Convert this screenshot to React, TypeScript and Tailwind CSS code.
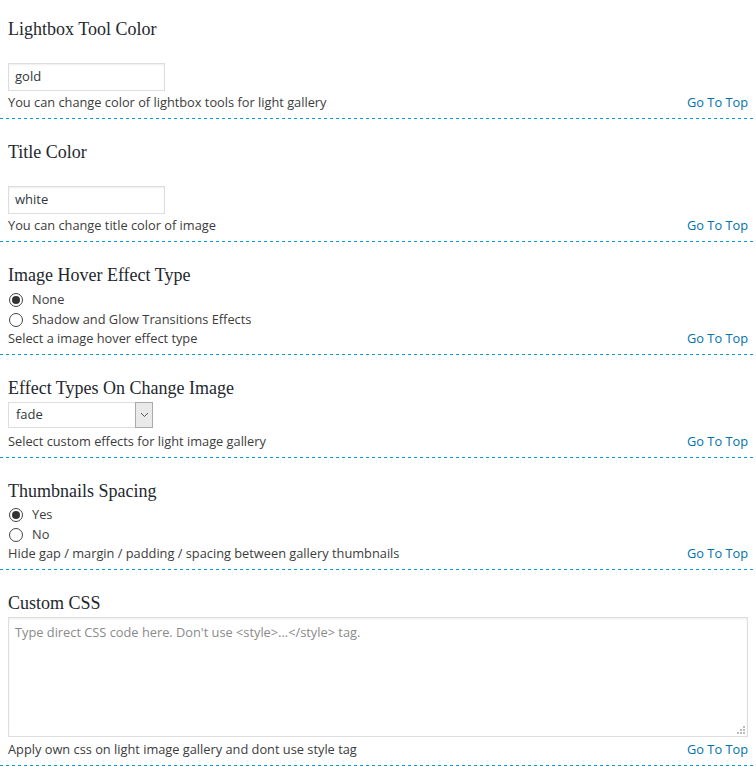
import React from "react";

const body = "font-['Segoe_UI','Open_Sans',sans-serif]";

function Footer({ text }: { text: string }) {
  return (
    <div className="flex justify-between items-center h-[18px] text-[12.8px] leading-[18px]">
      <span className="text-[#3c3c3c]">{text}</span>
      <a className="text-[#0073aa] mr-[8px]" href="#">Go To Top</a>
    </div>
  );
}

function Heading({ children }: { children: React.ReactNode }) {
  return (
    <h3 className="font-['Liberation_Serif',serif] text-[18px] leading-[24px] text-[#23282d] pl-[8px]">
      {children}
    </h3>
  );
}

function Radio({ checked, label }: { checked?: boolean; label: string }) {
  return (
    <div className="flex items-center h-[20px] pl-[9px]">
      <span className="w-[14px] h-[14px] rounded-full border border-[#444] bg-white flex items-center justify-center">
        {checked && <span className="w-[8px] h-[8px] rounded-full bg-[#333]" />}
      </span>
      <span className="ml-[9px] text-[12.8px] text-[#3c3c3c]">{label}</span>
    </div>
  );
}

function Section({ children, first }: { children: React.ReactNode; first?: boolean }) {
  return (
    <div>
      <div className={`${first ? "pt-[17px]" : "pt-[21px]"} pb-[7px]`}>{children}</div>
      <div className="h-px w-full bg-[repeating-linear-gradient(to_right,#00a0d2_0px,#00a0d2_3px,transparent_3px,transparent_6px)]" />
    </div>
  );
}

export default function App() {
  return (
    <div className={`${body} w-[756px] bg-white text-[13px] text-[#444]`}>
      <Section first>
        <Heading>Lightbox Tool Color</Heading>
        <div className="pl-[8px] mt-[22px]">
          <div className="w-[157px] h-[28px] border border-[#ddd] shadow-[inset_0_1px_2px_rgba(0,0,0,0.07)] px-[6px] flex items-center text-[13px] text-[#32373c]">gold</div>
        </div>
        <div className="pl-[8px] mt-[2px]"><Footer text="You can change color of lightbox tools for light gallery" /></div>
      </Section>
      <Section>
        <Heading>Title Color</Heading>
        <div className="pl-[8px] mt-[22px]">
          <div className="w-[157px] h-[28px] border border-[#ddd] shadow-[inset_0_1px_2px_rgba(0,0,0,0.07)] px-[6px] flex items-center text-[13px] text-[#32373c]">white</div>
        </div>
        <div className="pl-[8px] mt-[2px]"><Footer text="You can change title color of image" /></div>
      </Section>
      <Section>
        <Heading>Image Hover Effect Type</Heading>
        <div className="mt-[3px]">
          <Radio checked label="None" />
          <Radio label="Shadow and Glow Transitions Effects" />
        </div>
        <div className="pl-[8px] -mt-px"><Footer text="Select a image hover effect type" /></div>
      </Section>
      <Section>
        <Heading>Effect Types On Change Image</Heading>
        <div className="pl-[8px] mt-[2px]">
          <div className="w-[145px] h-[26px] border border-[#ddd] flex">
            <div className="flex-1 px-[7px] flex items-center text-[13px] text-[#32373c]">fade</div>
            <div className="w-[18px] bg-[#e9e9e9] border border-[#aaa] -my-px -mr-px h-[26px] flex items-center justify-center">
              <svg width="9" height="6" viewBox="0 0 9 6"><path d="M1 1 L4.5 4.5 L8 1" fill="none" stroke="#555" strokeWidth="1" /></svg>
            </div>
          </div>
        </div>
        <div className="pl-[8px] mt-[4px]"><Footer text="Select custom effects for light image gallery" /></div>
      </Section>
      <Section>
        <Heading>Thumbnails Spacing</Heading>
        <div className="mt-[2px]">
          <Radio checked label="Yes" />
          <Radio label="No" />
        </div>
        <div className="pl-[8px] -mt-px"><Footer text="Hide gap / margin / padding / spacing between gallery thumbnails" /></div>
      </Section>
      <Section>
        <Heading>Custom CSS</Heading>
        <div className="pl-[8px] pr-[8px] mt-[2px]">
          <div className="relative h-[120px] border border-[#ddd] shadow-[inset_0_1px_2px_rgba(0,0,0,0.07)] px-[6px] pt-[4px] text-[12.8px] text-[#8a8a8a] leading-[20px]">
            {"Type direct CSS code here. Don't use <style>...</style> tag."}
            <svg className="absolute right-[2px] bottom-[2px]" width="8" height="8" viewBox="0 0 8 8">
              <rect x="6" y="0" width="2" height="2" fill="#bbb" />
              <rect x="3" y="3" width="2" height="2" fill="#bbb" />
              <rect x="6" y="3" width="2" height="2" fill="#bbb" />
              <rect x="0" y="6" width="2" height="2" fill="#bbb" />
              <rect x="3" y="6" width="2" height="2" fill="#bbb" />
              <rect x="6" y="6" width="2" height="2" fill="#bbb" />
            </svg>
          </div>
        </div>
        <div className="pl-[8px] mt-[3px]"><Footer text="Apply own css on light image gallery and dont use style tag" /></div>
      </Section>
    </div>
  );
}
